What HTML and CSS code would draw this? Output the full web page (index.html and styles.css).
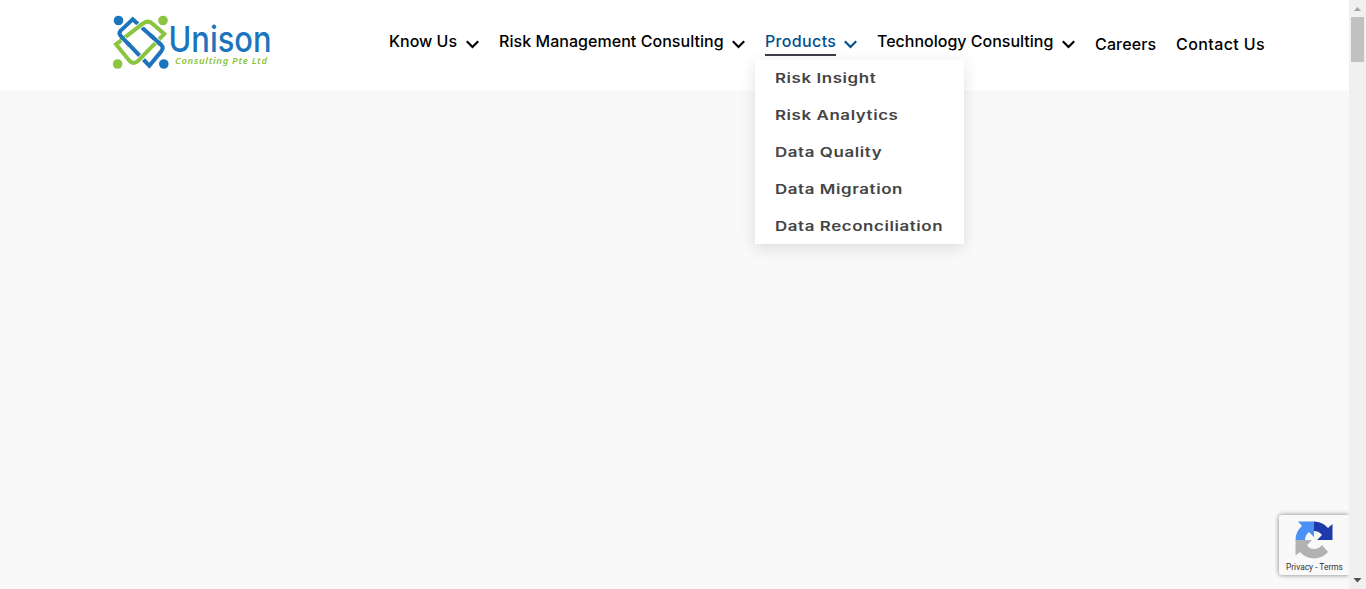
FILE: index.html
```html
<!DOCTYPE html>
<html lang="en">
<head>
<meta charset="utf-8">
<title>Unison Consulting</title>
<link rel="stylesheet" href="styles.css">
</head>
<body>
<div class="page">
  <header class="header">
    <a class="logo" aria-label="Unison Consulting">
      <svg width="162" height="60" viewBox="112 13 162 60">
        <g transform="translate(112 14) scale(.3333)" fill="none" stroke-width="12">
          <path d="M62 16 27 49Q18 57 26 66L112 155 147 113Q157 102 147 92Z" stroke="#1c75bc"/>
          <path d="M72 44 92 29Q106 17 120 28L128 35M100 119 79 140Q66 153 53 141" stroke="#fff" stroke-width="17"/>
          <path d="M12 91 92 29Q106 17 120 28L157 60 79 140Q66 153 53 141Z" stroke="#8bc53f"/>
          <path d="M33 73 46 87M126 73 138 84" stroke="#fff" stroke-width="17"/>
          <path d="M27 67 54 95M115 63 147 92" stroke="#1c75bc"/>
        </g>
        <g fill="#1c75bc"><circle cx="118.500" cy="20.500" r="4.800"/><circle cx="163.800" cy="64" r="4.800"/></g>
        <g fill="#8bc53f"><circle cx="163" cy="20.500" r="4.800"/><circle cx="117.600" cy="64" r="4.800"/></g>
        <text class="logo-name" x="168.500" y="52" textLength="103" lengthAdjust="spacingAndGlyphs">Unison</text>
        <text class="logo-tag" x="175" y="64" textLength="92">Consulting Pte Ltd</text>
      </svg>
    </a>
    <nav class="nav">
      <a class="item"><span class="label know">Know Us</span><svg class="chevron" viewBox="0 0 13 9"><path d="M.8 1.300 6.500 7 12.200 1.300"/></svg></a>
      <a class="item"><span class="label risk">Risk Management Consulting</span><svg class="chevron" viewBox="0 0 13 9"><path d="M.8 1.300 6.500 7 12.200 1.300"/></svg></a>
      <div class="item active"><span class="label products">Products</span><svg class="chevron" viewBox="0 0 13 9"><path d="M.8 1.300 6.500 7 12.200 1.300"/></svg>
        <div class="menu">
          <a><span>Risk Insight</span></a>
          <a><span>Risk Analytics</span></a>
          <a><span>Data Quality</span></a>
          <a><span>Data Migration</span></a>
          <a><span>Data Reconciliation</span></a>
        </div>
      </div>
      <a class="item"><span class="label tech">Technology Consulting</span><svg class="chevron" viewBox="0 0 13 9"><path d="M.8 1.300 6.500 7 12.200 1.300"/></svg></a>
      <a class="item plain"><span class="label careers">Careers</span></a>
      <a class="item plain"><span class="label contact">Contact Us</span></a>
    </nav>
  </header>
  <main class="content"></main>
  <aside class="captcha">
    <svg width="38" height="38" viewBox="0 0 38 38">
      <path fill="#1c3aa9" d="M37.500 19V3L33 7A18.500 18.500 0 0 0 19 .500V10Q24 10 27 14L22 19Z"/>
      <path fill="#4a90f5" d="M19 .500H3L7 5A18.500 18.500 0 0 0 .500 19H10Q10 14 14 11L19 16Z"/>
      <path fill="#b2b2b2" d="M.500 19V34.500L5 31A18.500 18.500 0 0 0 33 31L27 24Q24 28 19 28Q14 28 12 24L17 19Z"/>
    </svg>
    <span class="terms">Privacy - Terms</span>
  </aside>
</div>
<div class="scrollbar">
  <svg width="17" height="17"><path fill="#a3a3a3" d="M5 11 8.500 7 12 11Z"/></svg>
  <div class="thumb"></div>
  <svg class="down" width="17" height="17"><path fill="#505050" d="M4.500 6 8.500 10.500 12.500 6Z"/></svg>
</div>
</body>
</html>
```
FILE: styles.css
```css
* { box-sizing: border-box; }
body { margin: 0; height: 589px; display: flex; overflow: hidden; background: #f9f9f9; font-family: Inter, "Liberation Sans", sans-serif; }
.page { width: 1349px; display: flex; flex-direction: column; }
.header { height: 90px; background: #fff; display: flex; padding-left: 112px; }
.logo { width: 277px; padding-top: 13px; }
.logo svg { display: block; overflow: visible; }
.logo-name { font: 500 36px Inter, sans-serif; fill: #1c75bc; }
.logo-tag { font: italic 600 9.500px "Noto Sans", sans-serif; fill: #8bc53f; }
.nav { display: flex; gap: 20px; padding-top: 28px; color: #000; font-size: 16px; font-weight: 500; line-height: 26px; white-space: nowrap; }
.item { display: flex; position: relative; height: 28px; }
.plain { padding-top: 3px; }
.label { display: block; height: 28px; }
.know { width: 77px; letter-spacing: 0; }
.risk { width: 233px; letter-spacing: .05px; }
.products { width: 71px; margin-right: 8px; letter-spacing: .35px; border-bottom: 2px solid #3b3d48; }
.tech { width: 185px; letter-spacing: 0; }
.careers { width: 61px; letter-spacing: .15px; }
.contact { width: 90px; letter-spacing: .4px; }
.active { color: #034f8f; }
.chevron { width: 13px; height: 9px; margin-top: 12px; fill: none; stroke: currentColor; stroke-width: 2.200; }
.menu { position: absolute; left: -10px; top: 32px; width: 209px; height: 184px; background: rgba(255,255,255,.97); box-shadow: 0 4px 15px rgba(0,0,0,.12); color: #444; display: flex; flex-direction: column; padding-left: 20px; font-size: 13px; font-weight: 600; line-height: 36px; }
.menu a { height: 37px; flex: none; }
.menu span { display: inline-block; letter-spacing: .45px; transform: scaleX(1.300); transform-origin: left; }
.content { flex: 1; }
.captcha { position: absolute; left: 1279px; top: 515px; width: 70px; height: 60px; padding: 6px 0 0 16px; border-radius: 3px 0 0 3px; background: #f9f9f9; box-shadow: 0 0 5px #808080; clip-path: inset(-8px 0 -8px -8px); }
.captcha svg { display: block; }
.terms { display: block; margin: 2px 0 0 -9px; font: 8.400px/12px Roboto, sans-serif; color: #333; white-space: nowrap; }
.scrollbar { width: 17px; height: 589px; background: #f0f0f0; display: flex; flex-direction: column; }
.scrollbar svg { display: block; }
.thumb { width: 13px; height: 45px; margin-left: 2px; background: #c1c1c1; }
.scrollbar .down { margin-top: auto; }
```
